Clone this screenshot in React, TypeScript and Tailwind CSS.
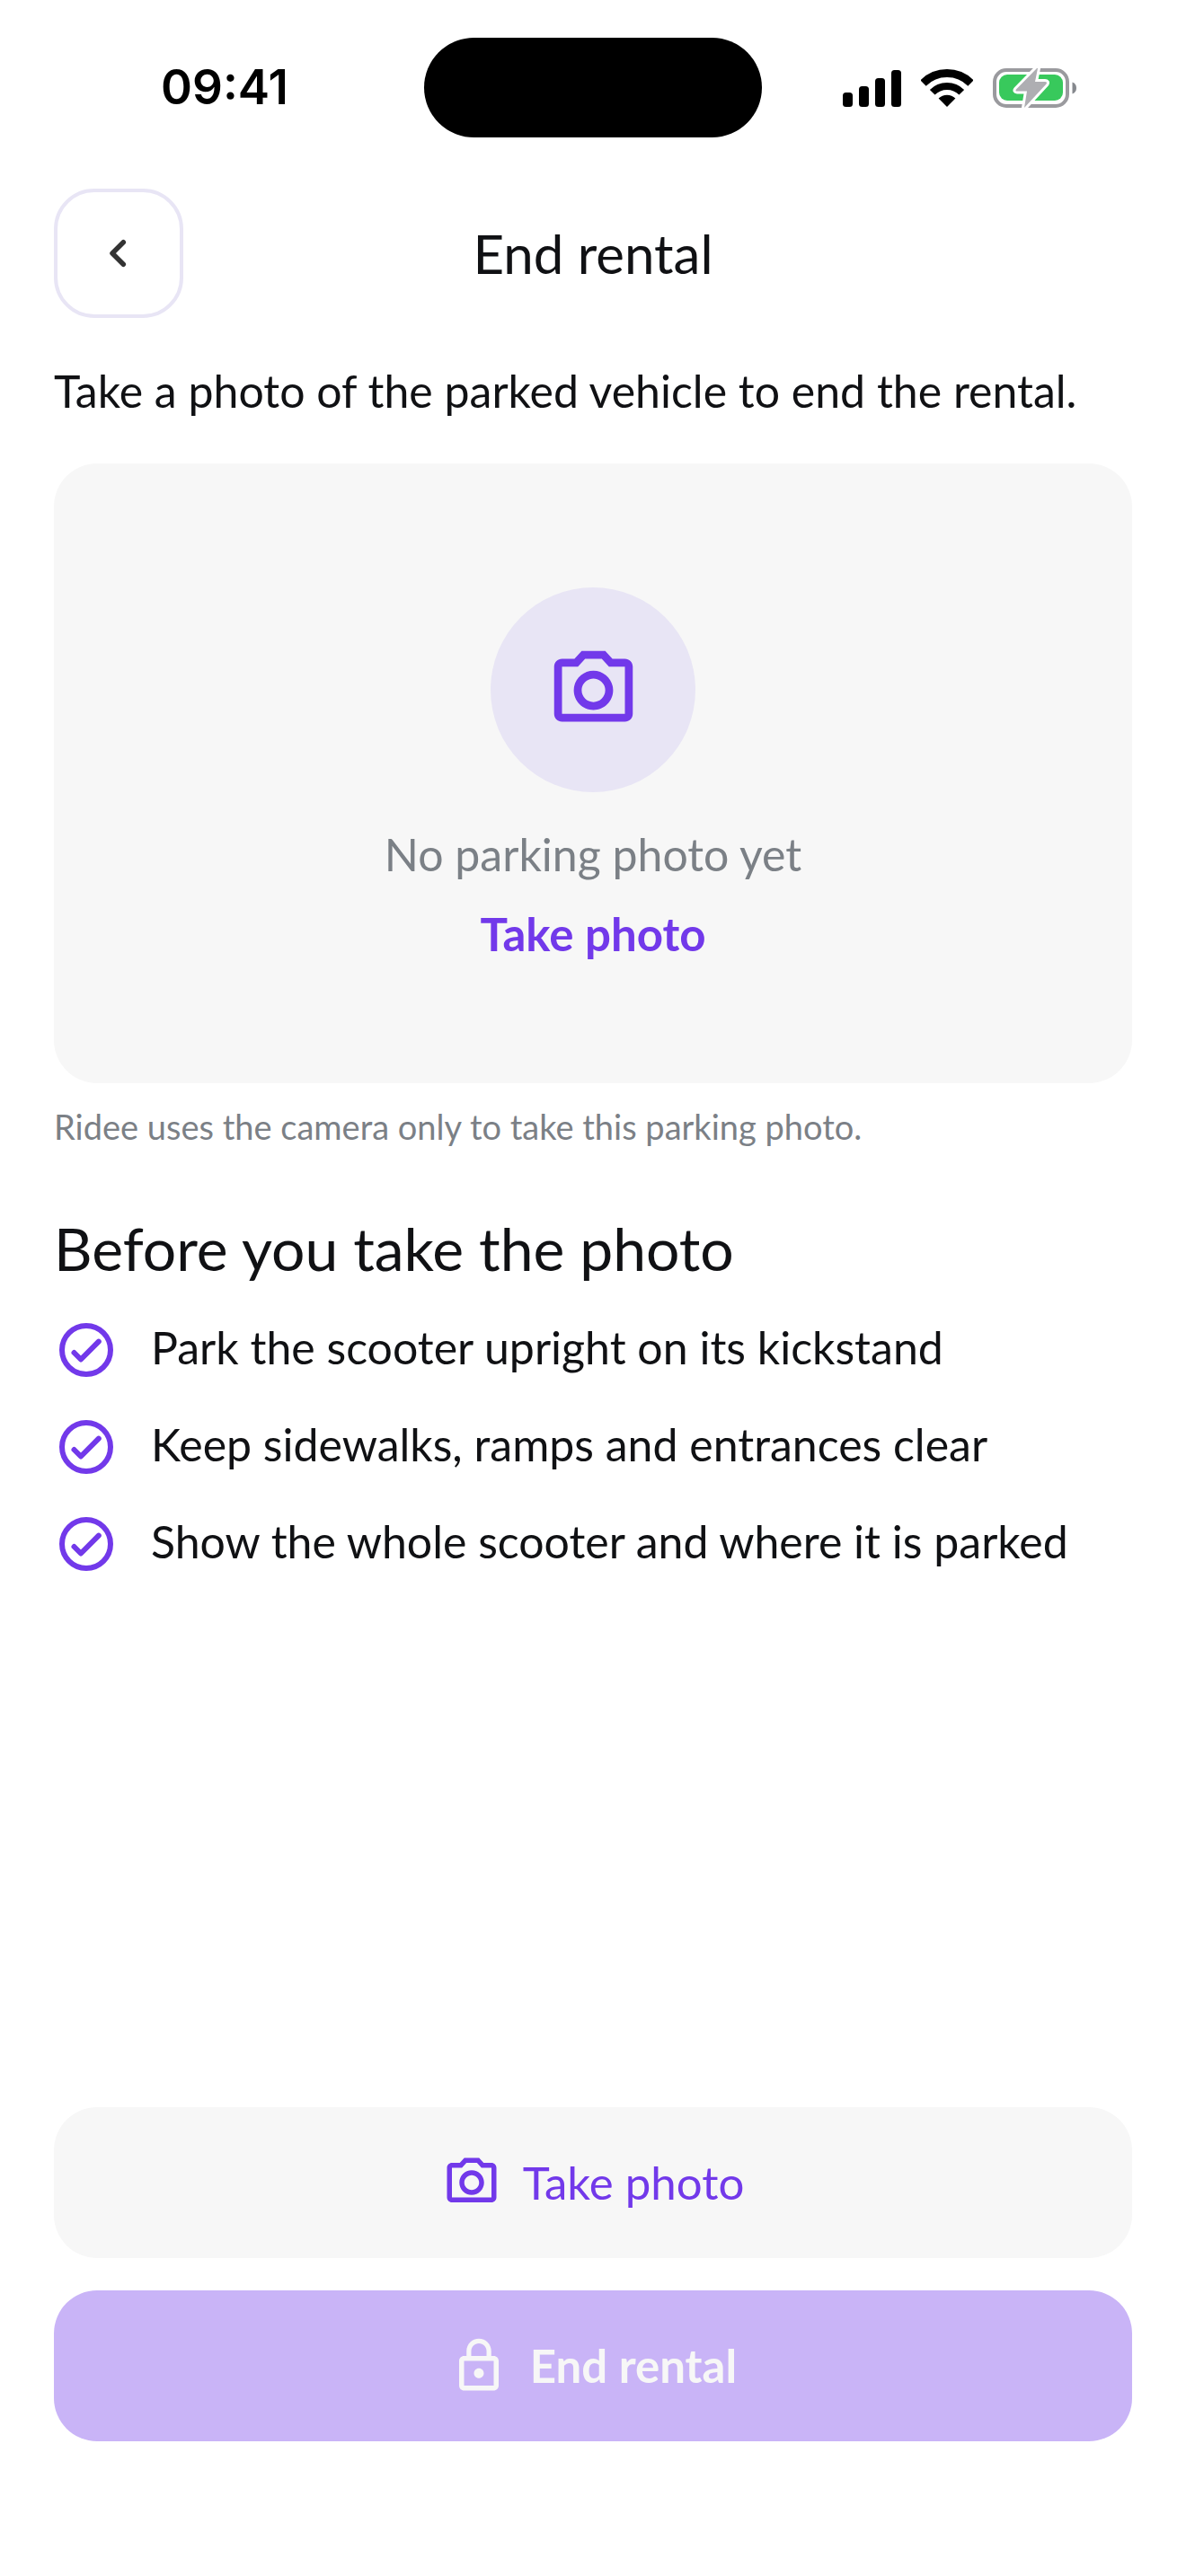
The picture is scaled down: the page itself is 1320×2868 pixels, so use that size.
import React from 'react'
import { MdLockOutline, MdOutlinePhotoCamera } from 'react-icons/md'

const PARKING_TIPS = [
    'Park the scooter upright on its kickstand',
    'Keep sidewalks, ramps and entrances clear',
    'Show the whole scooter and where it is parked',
]

const SignalIcon: React.FC = () => (
    <svg width="65" height="42" viewBox="0 0 65 42" fill="currentColor" aria-hidden="true">
        <rect x="0" y="26" width="11" height="16" rx="3.5" />
        <rect x="18" y="19" width="11" height="23" rx="3.5" />
        <rect x="36" y="10" width="11" height="32" rx="3.5" />
        <rect x="54" y="1" width="11" height="41" rx="3.5" />
    </svg>
)

const WifiIcon: React.FC = () => (
    <svg width="58" height="42" viewBox="0 0 58 42" fill="none" stroke="currentColor" aria-hidden="true">
        <path d="M2.5 15.5A37.5 37.5 0 0 1 55.5 15.5" strokeWidth="9" />
        <path d="M12.7 25.7A23 23 0 0 1 45.3 25.7" strokeWidth="8" />
        <path d="M29 42L19.6 32.6A13.3 13.3 0 0 1 38.4 32.6Z" fill="currentColor" stroke="none" />
    </svg>
)

const BatteryIcon: React.FC = () => (
    <svg width="94" height="46" viewBox="0 0 94 46" fill="none" aria-hidden="true">
        <rect x="2" y="3" width="81" height="40" rx="13" stroke="#9a9a9e" strokeWidth="4" />
        <path d="M88.5 16.5C91.5 17.5 93 20 93 23S91.5 28.5 88.5 29.5Z" fill="#85888d" />
        <rect x="7" y="8" width="71" height="29" rx="9" fill="#38c95c" />
        <path
            d="M49 1L26 24.5Q24.5 26.5 27 26.5H38L35 45L59.5 18.5Q61 16 58 16H47L50 1Z"
            fill="#aeaeb2"
            stroke="white"
            strokeWidth="6"
            strokeLinejoin="round"
            paintOrder="stroke"
        />
    </svg>
)

const CheckIcon: React.FC = () => (
    <svg
        className="size-18 shrink-0 text-[#7239ea]"
        viewBox="0 0 24 24"
        fill="none"
        stroke="currentColor"
        strokeWidth="2"
        strokeLinecap="round"
        strokeLinejoin="round"
        aria-hidden="true"
    >
        <circle cx="12" cy="12" r="9" />
        <path d="M7.5 13L10 15.5L16.6 8.9" />
    </svg>
)

const StatusBar: React.FC = () => (
    <div className="grid grid-cols-[1fr_376px_1fr] items-center pt-[42px] text-black">
        <time className="pl-7 text-center font-['Inter',sans-serif] text-[53px] leading-none font-semibold">
            09:41
        </time>
        <div className="h-[111px] rounded-full bg-black" />
        <div className="flex items-center justify-center gap-[22px] pr-8">
            <SignalIcon />
            <WifiIcon />
            <BatteryIcon />
        </div>
    </div>
)

const Header: React.FC = () => (
    <header className="mt-[57px] grid grid-cols-[144px_1fr_144px] items-center">
        <button
            type="button"
            aria-label="Back"
            className="flex size-36 items-center justify-center rounded-[45px] border-4 border-[#e8e5f5] text-[#333333]"
        >
            <svg width="24" height="36" viewBox="0 0 24 36" fill="none" aria-hidden="true">
                <path d="M17.3 5.7L5 18L17.3 30.3" stroke="currentColor" strokeWidth="5.5" strokeLinecap="round" strokeLinejoin="round" />
            </svg>
        </button>
        <h1 className="text-center text-[60px] leading-[72px]">End rental</h1>
    </header>
)

export default function App() {
    return (
        <div className="flex min-h-screen flex-col bg-white font-['Lato',sans-serif] text-[#101114]">
            <StatusBar />

            <main className="flex flex-1 flex-col px-15 pb-[150px]">
                <Header />

                <p className="my-[45px] text-[50px] leading-[72px]">
                    Take a photo of the parked vehicle to end the rental.
                </p>

                {/* Photo placeholder */}
                <section className="flex flex-col items-center rounded-[48px] bg-[#f7f7f7] pt-[138px] pb-[130px]">
                    <div className="flex size-57 items-center justify-center rounded-full bg-[#e8e5f5] text-[#7239ea]">
                        <MdOutlinePhotoCamera size={105} />
                    </div>
                    <p className="mt-[33px] text-[50px] leading-[72px] text-[#7b8086]">No parking photo yet</p>
                    <button type="button" className="mt-[17px] text-[51px] leading-[72px] font-bold text-[#7239ea]">
                        Take photo
                    </button>
                </section>

                <p className="mt-6 text-[38px] leading-[48px] text-[#7b8086]">
                    Ridee uses the camera only to take this parking photo.
                </p>

                <h2 className="mt-[70px] text-[66px] leading-[84px]">Before you take the photo</h2>
                <ul className="mt-[35px] flex flex-col gap-9">
                    {PARKING_TIPS.map((tip) => (
                        <li key={tip} className="flex items-start gap-9">
                            <CheckIcon />
                            <span className="text-[50px] leading-[66px]">{tip}</span>
                        </li>
                    ))}
                </ul>

                {/* Actions */}
                <div className="mt-auto flex flex-col gap-9 text-[51px] leading-[72px]">
                    <button
                        type="button"
                        className="flex items-center justify-center gap-6 rounded-[48px] bg-[#f7f7f7] py-12 text-[#7239ea]"
                    >
                        <MdOutlinePhotoCamera size={66} />
                        Take photo
                    </button>
                    <button
                        type="button"
                        disabled
                        className="flex items-center justify-center gap-6 rounded-[48px] bg-[#c9b4f7] py-12 font-bold text-[#f7f7f7]"
                    >
                        <MdLockOutline size={66} />
                        End rental
                    </button>
                </div>
            </main>
        </div>
    )
}
